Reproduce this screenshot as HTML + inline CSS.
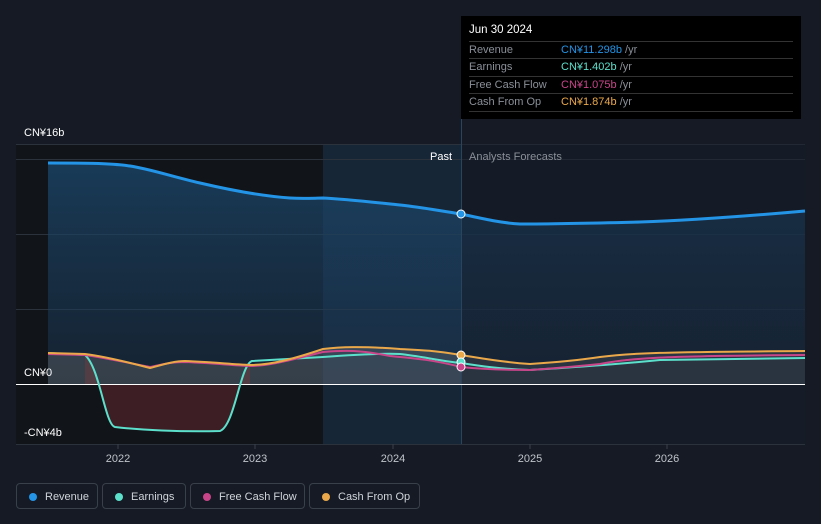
<!DOCTYPE html><html><head><style>
body{margin:0;background:#151a24;font-family:"Liberation Sans",sans-serif;}
.wrap{position:relative;width:821px;height:524px;overflow:hidden;background:#151a24}
.tt{position:absolute;left:461px;top:16px;width:340px;height:103px;background:#000;color:#fff;font-size:11px}
.tt .h{position:absolute;left:8px;top:8px;font-size:11.5px}
.row{position:absolute;left:8px;width:324px;border-top:1px solid #333;height:17px;line-height:17px;color:#8a8f98}
.row span{position:absolute;left:92px}
.lg{position:absolute;top:483px;height:26px;border:1px solid #3a404a;border-radius:4px;color:#d0d4da;font-size:11px;line-height:26px;box-sizing:border-box}
.lg i{position:absolute;left:12px;top:9px;width:8px;height:8px;border-radius:50%}
.lg b{font-weight:normal;position:absolute;left:28px}
</style></head><body><div class="wrap">
<svg width="821" height="524" style="position:absolute;left:0;top:0">
<defs><linearGradient id="rg" x1="0" y1="0" x2="0" y2="1"><stop offset="0" stop-color="#1b4a70" stop-opacity=".8"/><stop offset="1" stop-color="#1b3550" stop-opacity=".5"/></linearGradient></defs>
<rect x="16" y="144" width="307" height="300" fill="#111419"/>
<rect x="323" y="144" width="138" height="300" fill="#172637"/>
<rect x="461" y="144" width="344" height="300" fill="#161c27"/>
<g stroke="#2c323c" stroke-width="1"><line x1="16" y1="144.5" x2="805" y2="144.5"/><line x1="16" y1="159.5" x2="805" y2="159.5"/><line x1="16" y1="234.5" x2="805" y2="234.5"/><line x1="16" y1="309.5" x2="805" y2="309.5"/><line x1="16" y1="444.5" x2="805" y2="444.5"/></g>
<path d="M48,163 C80,163 110,163 130,166 C150,169 170,176 200,183 C230,190 260,196 290,198 C305,199 315,198 323,198 C345,199 380,203 400,205 C420,207 435,210 461,214 C480,218 500,223 520,224 C560,224 600,223 640,222 C700,220 760,215 805,211 L805,384 L48,384Z" fill="url(#rg)" opacity=".9"/>
<path d="M85,355 C100,370 105,425 115,427 C140,430 180,432 220,431 C235,425 240,365 250,362 L250,384 L85,384Z" fill="#4a2028" opacity=".8"/>
<path d="M48,353 L85,354 C100,356 120,360 150,368 C165,364 175,361 185,361 C210,362 230,364 250,365 C270,365 290,360 323,349 C340,347 360,346 400,349 C420,350 430,350 461,355 C480,358 500,362 530,364 C560,362 580,360 600,357 C630,353 660,352 805,351 L805,384 L48,384Z" fill="#8a8a8a" opacity=".28"/>
<rect x="462" y="144" width="343" height="240" fill="#151a24" opacity=".35"/>
<line x1="461.5" y1="16" x2="461.5" y2="444" stroke="#28445e"/>
<line x1="16" y1="384.5" x2="805" y2="384.5" stroke="#fff" stroke-width="1"/>
<path d="M48,163 C80,163 110,163 130,166 C150,169 170,176 200,183 C230,190 260,196 290,198 C305,199 315,198 323,198 C345,199 380,203 400,205 C420,207 435,210 461,214 C480,218 500,223 520,224 C560,224 600,223 640,222 C700,220 760,215 805,211" fill="none" stroke="#2394e6" stroke-width="3"/>
<path d="M48,353 L85,355 C100,368 105,425 115,427 C140,430 180,432 220,431 C235,425 240,365 252,361 C270,360 290,359 323,357 C350,355 380,353 400,354 C420,356 440,361 461,363 C480,366 500,369 530,370 C560,368 600,366 660,360 L805,358" fill="none" stroke="#5ce0cc" stroke-width="2"/>
<path d="M48,354 L85,355 C100,357 120,361 150,367 C165,364 170,362 185,362 C210,363 230,365 250,366 C270,366 290,360 323,352 C345,350 360,350 390,356 C410,358 430,359 461,367 C480,369 500,370 530,370 C560,368 580,366 600,364 C630,358 660,356 805,355" fill="none" stroke="#c9458a" stroke-width="2"/>
<path d="M48,353 L85,354 C100,356 120,360 150,368 C165,364 175,361 185,361 C210,362 230,364 250,365 C270,365 290,360 323,349 C340,347 360,346 400,349 C420,350 430,350 461,355 C480,358 500,362 530,364 C560,362 580,360 600,357 C630,353 660,352 805,351" fill="none" stroke="#eaa84a" stroke-width="2"/>
<circle cx="461" cy="214" r="4" fill="#2394e6" stroke="#fff" stroke-width="1"/>
<circle cx="461" cy="355" r="4" fill="#eaa84a" stroke="#fff" stroke-width="1"/>
<circle cx="461" cy="362" r="4" fill="#5ce0cc" stroke="#fff" stroke-width="1"/>
<circle cx="461" cy="367" r="4" fill="#c9458a" stroke="#fff" stroke-width="1"/>
<g stroke="#3a404a"><line x1="118" y1="444" x2="118" y2="449"/><line x1="255" y1="444" x2="255" y2="449"/><line x1="393" y1="444" x2="393" y2="449"/><line x1="530" y1="444" x2="530" y2="449"/><line x1="667" y1="444" x2="667" y2="449"/></g>
<g font-family="Liberation Sans,sans-serif" font-size="11" fill="#fff">
<text x="24" y="136">CN¥16b</text><text x="24" y="376">CN¥0</text><text x="24" y="436">-CN¥4b</text>
<text x="430" y="160">Past</text><text x="469" y="160" fill="#8a8f98">Analysts Forecasts</text>
<g fill="#c0c4ca" text-anchor="middle"><text x="118" y="462">2022</text><text x="255" y="462">2023</text><text x="393" y="462">2024</text><text x="530" y="462">2025</text><text x="667" y="462">2026</text></g>
</g></svg>
<div class="tt"><div class="h">Jun 30 2024</div>
<div class="row" style="top:25px">Revenue<span style="color:#2394e6">CN¥11.298b <i style="color:#8a8f98;font-style:normal">/yr</i></span></div>
<div class="row" style="top:42px">Earnings<span style="color:#5ce0cc">CN¥1.402b <i style="color:#8a8f98;font-style:normal">/yr</i></span></div>
<div class="row" style="top:60px">Free Cash Flow<span style="color:#c9458a">CN¥1.075b <i style="color:#8a8f98;font-style:normal">/yr</i></span></div>
<div class="row" style="top:77px;border-bottom:1px solid #333">Cash From Op<span style="color:#eaa84a">CN¥1.874b <i style="color:#8a8f98;font-style:normal">/yr</i></span></div>
</div>
<div class="lg" style="left:16px;width:82px"><i style="background:#2394e6"></i><b>Revenue</b></div>
<div class="lg" style="left:102px;width:84px"><i style="background:#5ce0cc"></i><b>Earnings</b></div>
<div class="lg" style="left:190px;width:115px"><i style="background:#c9458a"></i><b>Free Cash Flow</b></div>
<div class="lg" style="left:309px;width:111px"><i style="background:#eaa84a"></i><b>Cash From Op</b></div>
</div></body></html>
